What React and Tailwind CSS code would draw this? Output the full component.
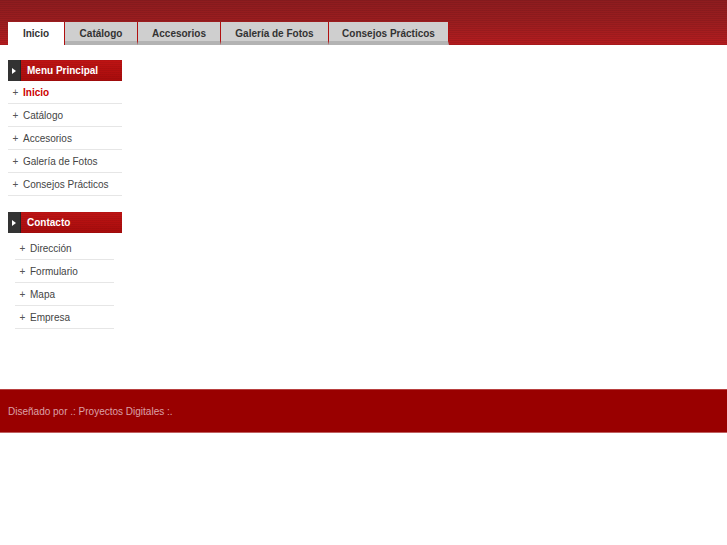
import React from "react";

const tabs = [
  { t: "Inicio", w: 57, active: true },
  { t: "Catálogo", w: 73 },
  { t: "Accesorios", w: 83 },
  { t: "Galería de Fotos", w: 108 },
  { t: "Consejos Prácticos", w: 120 },
];

const stripes = {
  backgroundImage:
    "repeating-linear-gradient(0deg, rgba(0,0,0,0.08) 0px, rgba(0,0,0,0.08) 1px, transparent 1px, transparent 2px), linear-gradient(180deg, #8e1c1f 0%, #9c1d1f 50%, #b51c1f 100%)",
};

function Head({ title }) {
  return (
    <div className="flex h-[21px]">
      <div className="w-[13px] bg-[#333333] flex items-center justify-center border-r border-[#222]">
        <svg width="4" height="6" viewBox="0 0 4 6"><path d="M0 0L4 3L0 6Z" fill="#fff" /></svg>
      </div>
      <div
        className="flex-1 flex items-center pl-[6px] text-[10px] font-bold text-white"
        style={{ backgroundImage: "repeating-linear-gradient(0deg, rgba(0,0,0,0.06) 0px, rgba(0,0,0,0.06) 1px, transparent 1px, transparent 2px), linear-gradient(180deg,#c01414,#a80c0c)" }}
      >
        {title}
      </div>
    </div>
  );
}

function Item({ t, active }) {
  return (
    <div className="h-[23px] flex items-center border-b border-[#e6e6e6] text-[10px]">
      <span className="w-[15px] text-center text-[#555] text-[10px]">+</span>
      <span className={active ? "text-[#cc0000] font-bold" : "text-[#444]"}>{t}</span>
    </div>
  );
}

export default function App() {
  return (
    <div className="w-[727px] h-[545px] bg-white" style={{ fontFamily: '"Liberation Sans", Arial, sans-serif' }}>
      <div className="h-[45px] flex items-end pl-[8px]" style={stripes}>
        {tabs.map((tb) => (
          <div
            key={tb.t}
            className={
              "h-[23px] flex items-center justify-center text-[10px] font-bold text-[#333] border-r border-[#b01010] " +
              (tb.active ? "bg-white" : "bg-[#cfcfcf] border-b-[4px] border-b-[#b3b3b3] pt-[4px]")
            }
            style={{ width: tb.w }}
          >
            {tb.t}
          </div>
        ))}
      </div>
      <div className="h-[344px] pt-[15px] pl-[8px]">
        <div className="w-[114px]">
          <Head title="Menu Principal" />
          <Item t="Inicio" active />
          <Item t="Catálogo" />
          <Item t="Accesorios" />
          <Item t="Galería de Fotos" />
          <Item t="Consejos Prácticos" />
          <div className="h-[16px]" />
          <Head title="Contacto" />
          <div className="pl-[7px] pr-[8px] pt-[4px]">
            <Item t="Dirección" />
            <Item t="Formulario" />
            <Item t="Mapa" />
            <Item t="Empresa" />
          </div>
        </div>
      </div>
      <div className="h-[44px] bg-[#990000] border-t border-[#b84040] border-b border-b-[#c06060] flex items-center pl-[8px] text-[10px] text-[#dba0a8]">
        Diseñado por .: Proyectos Digitales :.
      </div>
    </div>
  );
}
